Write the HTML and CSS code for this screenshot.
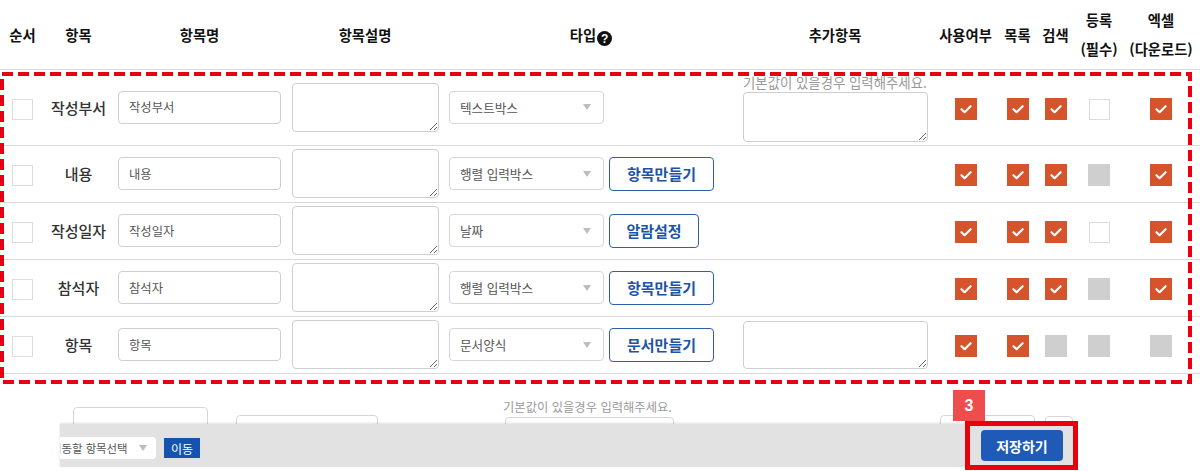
FILE: index.html
```html
<!DOCTYPE html>
<html lang="ko">
<head>
<meta charset="utf-8">
<title>항목 설정</title>
<link rel="stylesheet" href="styles.css">
</head>
<body>
<div class="page">
  <table class="grid">
    <colgroup>
      <col class="c-order"><col class="c-item"><col class="c-name"><col class="c-desc"><col class="c-type"><col class="c-extra"><col class="c-use"><col class="c-list"><col class="c-search"><col class="c-req"><col class="c-excel">
    </colgroup>
    <thead>
      <tr>
        <th>순서</th>
        <th>항목</th>
        <th>항목명</th>
        <th>항목설명</th>
        <th>타입<span class="help">?</span></th>
        <th>추가항목</th>
        <th>사용여부</th>
        <th>목록</th>
        <th>검색</th>
        <th>등록<br>(필수)</th>
        <th>엑셀<br>(다운로드)</th>
      </tr>
    </thead>
    <tbody>
      <tr class="row-first">
        <td><span class="box box-plain"></span></td>
        <td class="label">작성부서</td>
        <td><div class="input">작성부서</div></td>
        <td><textarea class="area"></textarea></td>
        <td class="type"><div class="type-wrap"><div class="select"><span>텍스트박스</span><span class="caret"></span></div></div></td>
        <td class="extra-cell"><div class="hint">기본값이 있을경우 입력해주세요.</div><textarea class="area area-wide"></textarea></td>
        <td><span class="box box-on"><svg viewBox="0 0 22 22"><path d="M6.5 11.2 L9.6 14.2 L15.6 8.2"/></svg></span></td>
        <td><span class="box box-on"><svg viewBox="0 0 22 22"><path d="M6.5 11.2 L9.6 14.2 L15.6 8.2"/></svg></span></td>
        <td><span class="box box-on"><svg viewBox="0 0 22 22"><path d="M6.5 11.2 L9.6 14.2 L15.6 8.2"/></svg></span></td>
        <td><span class="box box-plain"></span></td>
        <td><span class="box box-on"><svg viewBox="0 0 22 22"><path d="M6.5 11.2 L9.6 14.2 L15.6 8.2"/></svg></span></td>
      </tr>
      <tr>
        <td><span class="box box-plain"></span></td>
        <td class="label">내용</td>
        <td><div class="input">내용</div></td>
        <td><textarea class="area"></textarea></td>
        <td class="type"><div class="type-wrap"><div class="select"><span>행렬 입력박스</span><span class="caret"></span></div><button class="btn-line btn-w105">항목만들기</button></div></td>
        <td></td>
        <td><span class="box box-on"><svg viewBox="0 0 22 22"><path d="M6.5 11.2 L9.6 14.2 L15.6 8.2"/></svg></span></td>
        <td><span class="box box-on"><svg viewBox="0 0 22 22"><path d="M6.5 11.2 L9.6 14.2 L15.6 8.2"/></svg></span></td>
        <td><span class="box box-on"><svg viewBox="0 0 22 22"><path d="M6.5 11.2 L9.6 14.2 L15.6 8.2"/></svg></span></td>
        <td><span class="box box-off"></span></td>
        <td><span class="box box-on"><svg viewBox="0 0 22 22"><path d="M6.5 11.2 L9.6 14.2 L15.6 8.2"/></svg></span></td>
      </tr>
      <tr>
        <td><span class="box box-plain"></span></td>
        <td class="label">작성일자</td>
        <td><div class="input">작성일자</div></td>
        <td><textarea class="area"></textarea></td>
        <td class="type"><div class="type-wrap"><div class="select"><span>날짜</span><span class="caret"></span></div><button class="btn-line btn-w90">알람설정</button></div></td>
        <td></td>
        <td><span class="box box-on"><svg viewBox="0 0 22 22"><path d="M6.5 11.2 L9.6 14.2 L15.6 8.2"/></svg></span></td>
        <td><span class="box box-on"><svg viewBox="0 0 22 22"><path d="M6.5 11.2 L9.6 14.2 L15.6 8.2"/></svg></span></td>
        <td><span class="box box-on"><svg viewBox="0 0 22 22"><path d="M6.5 11.2 L9.6 14.2 L15.6 8.2"/></svg></span></td>
        <td><span class="box box-plain"></span></td>
        <td><span class="box box-on"><svg viewBox="0 0 22 22"><path d="M6.5 11.2 L9.6 14.2 L15.6 8.2"/></svg></span></td>
      </tr>
      <tr>
        <td><span class="box box-plain"></span></td>
        <td class="label">참석자</td>
        <td><div class="input">참석자</div></td>
        <td><textarea class="area"></textarea></td>
        <td class="type"><div class="type-wrap"><div class="select"><span>행렬 입력박스</span><span class="caret"></span></div><button class="btn-line btn-w105">항목만들기</button></div></td>
        <td></td>
        <td><span class="box box-on"><svg viewBox="0 0 22 22"><path d="M6.5 11.2 L9.6 14.2 L15.6 8.2"/></svg></span></td>
        <td><span class="box box-on"><svg viewBox="0 0 22 22"><path d="M6.5 11.2 L9.6 14.2 L15.6 8.2"/></svg></span></td>
        <td><span class="box box-on"><svg viewBox="0 0 22 22"><path d="M6.5 11.2 L9.6 14.2 L15.6 8.2"/></svg></span></td>
        <td><span class="box box-off"></span></td>
        <td><span class="box box-on"><svg viewBox="0 0 22 22"><path d="M6.5 11.2 L9.6 14.2 L15.6 8.2"/></svg></span></td>
      </tr>
      <tr>
        <td><span class="box box-plain"></span></td>
        <td class="label">항목</td>
        <td><div class="input">항목</div></td>
        <td><textarea class="area"></textarea></td>
        <td class="type"><div class="type-wrap"><div class="select"><span>문서양식</span><span class="caret"></span></div><button class="btn-line btn-w105">문서만들기</button></div></td>
        <td><textarea class="area area-wide area-short"></textarea></td>
        <td><span class="box box-on"><svg viewBox="0 0 22 22"><path d="M6.5 11.2 L9.6 14.2 L15.6 8.2"/></svg></span></td>
        <td><span class="box box-on"><svg viewBox="0 0 22 22"><path d="M6.5 11.2 L9.6 14.2 L15.6 8.2"/></svg></span></td>
        <td><span class="box box-off"></span></td>
        <td><span class="box box-off"></span></td>
        <td><span class="box box-off"></span></td>
      </tr>
    </tbody>
  </table>

  <div class="ghost-row">
    <div class="ghost g-input1"></div>
    <div class="ghost g-input2"></div>
    <div class="g-extra">
      <div class="hint hint-sm">기본값이 있을경우 입력해주세요.</div>
      <div class="ghost g-area"></div>
    </div>
    <div class="ghost g-box3"></div>
    <div class="ghost g-box4"></div>
  </div>

  <svg class="highlight" width="1194" height="312" viewBox="0 0 1194 312">
    <rect x="2" y="2" width="1188" height="308" />
  </svg>

  <div class="footer">
    <div class="move-group">
      <div class="select select-sm"><span>이동할 항목선택</span><span class="caret"></span></div>
      <button class="btn-move">이동</button>
    </div>
    <button class="btn-save">저장하기</button>
  </div>
  <div class="save-mark"></div>
  <div class="badge">3</div>
</div>
</body>
</html>
```

FILE: styles.css
```css
* { box-sizing: border-box; }

html, body {
  margin: 0;
  padding: 0;
  background: #fff;
}

body {
  font-family: "Noto Sans CJK KR", "Noto Sans", "Liberation Sans", sans-serif;
  color: #222;
}

.page {
  position: relative;
  width: 1200px;
  height: 471px;
  overflow: hidden;
}

/* ---------- table ---------- */
.grid {
  width: 1200px;
  table-layout: fixed;
  border-collapse: collapse;
}

.c-order { width: 45px; }
.c-item { width: 67px; }
.c-name { width: 175px; }
.c-desc { width: 156px; }
.c-type { width: 296px; }
.c-extra { width: 192px; }
.c-use { width: 69px; }
.c-list { width: 35px; }
.c-search { width: 41px; }
.c-req { width: 46px; }
.c-excel { width: 78px; }

.grid th {
  height: 69px;
  padding: 0;
  font-size: 14.3px;
  font-weight: 700;
  line-height: 29px;
  color: #111;
  text-align: center;
  vertical-align: middle;
  white-space: nowrap;
  border-bottom: 1px solid #d9d9d9;
}

.help {
  display: inline-flex;
  align-items: center;
  justify-content: center;
  width: 15px;
  height: 15px;
  margin-left: 1px;
  border-radius: 50%;
  background: #111;
  color: #fff;
  font-size: 12px;
  font-weight: 700;
  line-height: 1;
  vertical-align: -2px;
  font-family: "Liberation Sans", sans-serif;
}

.grid td {
  height: 57px;
  padding: 0;
  text-align: center;
  vertical-align: middle;
  border-bottom: 1px solid #d9d9d9;
}

.grid .row-first td {
  height: 76px;
}

.grid td.label {
  font-size: 15px;
  font-weight: 500;
  color: #333;
  white-space: nowrap;
}

.grid td.type {
  text-align: left;
  padding-left: 6px;
}

.grid td.extra-cell {
  vertical-align: bottom;
  padding-bottom: 3px;
  text-align: left;
  padding-left: 4px;
}

/* ---------- controls ---------- */
.input {
  display: flex;
  align-items: center;
  width: 163px;
  height: 33px;
  margin: 0 auto;
  padding-left: 10px;
  border: 1px solid #cfcfcf;
  border-radius: 4px;
  background: #fff;
  font-size: 12.3px;
  color: #555;
  text-align: left;
}

.area {
  display: block;
  width: 147px;
  height: 49px;
  margin: 0 auto;
  border: 1px solid #cfcfcf;
  border-radius: 4px;
  background: #fff;
  font-family: inherit;
  font-size: 12px;
  resize: both;
}

.area-wide {
  width: 185px;
  height: 50px;
  margin: 0;
}

.grid td .area-short {
  height: 48px;
  margin: 0 auto;
}

.hint {
  font-size: 13.4px;
  line-height: 16px;
  color: #9a9a9a;
  white-space: nowrap;
  margin-bottom: 2px;
}

.hint-sm {
  font-size: 12.3px;
  line-height: 14px;
}

.type-wrap {
  display: flex;
  align-items: center;
  gap: 5px;
}

.select {
  display: flex;
  align-items: center;
  justify-content: space-between;
  width: 155px;
  height: 33px;
  padding: 0 12px 0 10px;
  border: 1px solid #d6d6d6;
  border-radius: 4px;
  background: #fff;
  font-size: 12.6px;
  color: #555;
  white-space: nowrap;
}

.caret {
  flex: none;
  width: 0;
  height: 0;
  border-left: 4px solid transparent;
  border-right: 4px solid transparent;
  border-top: 6px solid #bdbdbd;
}

.btn-line {
  height: 34px;
  padding: 0;
  border: 1px solid #2f5fa8;
  border-radius: 4px;
  background: #fff;
  color: #1d55a6;
  font-family: inherit;
  font-size: 15px;
  font-weight: 700;
}

.btn-w105 { width: 105px; }
.btn-w90 { width: 90px; }

.box {
  display: inline-block;
  width: 22px;
  height: 22px;
  vertical-align: middle;
}

.box svg {
  display: block;
  width: 22px;
  height: 22px;
}

.box svg path {
  fill: none;
  stroke: #fff;
  stroke-width: 2.2;
  stroke-linecap: round;
  stroke-linejoin: round;
}

.box-on { background: #d6542c; }
.box-off { background: #cfcfcf; }
.box-plain {
  width: 21px;
  height: 21px;
  background: #fff;
  border: 1px solid #dcdcdc;
}

/* ---------- partially visible row below ---------- */
.ghost-row {
  display: flex;
  align-items: flex-start;
  margin-top: 26px;
  padding-left: 73px;
}

.ghost {
  height: 36px;
  border: 1px solid #d6d6d6;
  border-radius: 4px;
  background: #fff;
}

.g-input1 { width: 135px; margin-top: 7px; }
.g-input2 { width: 142px; margin-top: 15px; margin-left: 28px; }
.g-extra { margin-left: 125px; width: 171px; }
.g-area { width: 169px; margin-left: 2px; margin-top: 3px; height: 40px; }
.g-box3 { width: 95px; margin-top: 15px; margin-left: 266px; }
.g-box4 { width: 28px; margin-top: 16px; margin-left: 10px; }

/* ---------- annotation overlays ---------- */
.highlight {
  position: absolute;
  left: 0;
  top: 72px;
}

.highlight rect {
  fill: none;
  stroke: #e60012;
  stroke-width: 4;
  stroke-dasharray: 11 5;
}

.footer {
  position: absolute;
  left: 60px;
  top: 424px;
  width: 1015px;
  height: 43px;
  display: flex;
  align-items: center;
  justify-content: space-between;
  background: #e2e2e2;
  box-shadow: 0 -1px 2px rgba(0, 0, 0, 0.12);
  overflow: hidden;
}

.move-group {
  display: flex;
  align-items: center;
  gap: 8px;
  margin-left: -16px;
  margin-top: 5px;
}

.select-sm {
  width: 112px;
  height: 22px;
  border: none;
  padding: 0 9px 0 7px;
  font-size: 11.4px;
}

.btn-move {
  width: 36px;
  height: 20px;
  padding: 0;
  border: none;
  background: #1653ae;
  color: #fff;
  font-family: inherit;
  font-size: 12px;
}

.btn-save {
  width: 82px;
  height: 31px;
  margin-right: 12px;
  padding: 0;
  border: none;
  border-radius: 4px;
  background: #1f5bb6;
  color: #fff;
  font-family: inherit;
  font-size: 14px;
  font-weight: 700;
}

.save-mark {
  position: absolute;
  left: 965px;
  top: 421px;
  width: 113px;
  height: 49px;
  border: 5px solid #e8000d;
}

.badge {
  position: absolute;
  left: 953px;
  top: 390px;
  width: 32px;
  height: 31px;
  display: flex;
  align-items: center;
  justify-content: center;
  background: #ee4d4d;
  color: #fff;
  font-family: "Liberation Sans", sans-serif;
  font-size: 16px;
  font-weight: 700;
}
```
